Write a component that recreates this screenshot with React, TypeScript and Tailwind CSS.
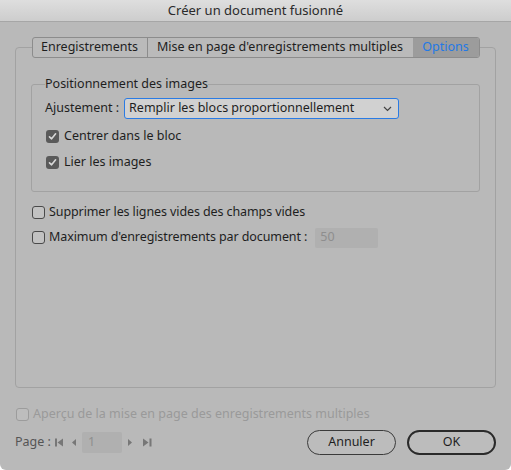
import React from 'react'

const FONT = { fontFamily: '"Noto Sans", "DejaVu Sans", sans-serif' }

function CheckBox({ checked, disabled }: { checked?: boolean; disabled?: boolean }) {
  if (checked) {
    return (
      <span className="flex h-[13px] w-[13px] shrink-0 items-center justify-center rounded-[3px] bg-[#5a5a5a]">
        <svg width="9" height="9" viewBox="0 0 9 9">
          <path d="M1.5 4.8 L3.6 6.8 L7.6 1.8" fill="none" stroke="#d8d8d8" strokeWidth="1.6" strokeLinecap="round" strokeLinejoin="round" />
        </svg>
      </span>
    )
  }
  return (
    <span
      className={
        disabled
          ? 'h-[13px] w-[13px] shrink-0 rounded-[3px] border border-[#9c9c9c] bg-[#bdbdbd]'
          : 'h-[13px] w-[13px] shrink-0 rounded-[3px] border border-[#4a4a4a] bg-[#c2c2c2]'
      }
    />
  )
}

function NavIcon({ kind }: { kind: 'first' | 'prev' | 'next' | 'last' }) {
  const c = '#777'
  return (
    <svg width="9" height="9" viewBox="0 0 9 9">
      {kind === 'first' && (
        <>
          <rect x="0" y="0.5" width="2" height="8" fill={c} />
          <path d="M8 0.5 L2.5 4.5 L8 8.5 Z" fill={c} />
        </>
      )}
      {kind === 'prev' && <path d="M5 1 L1 4.5 L5 8 Z" fill={c} />}
      {kind === 'next' && <path d="M1 1 L5 4.5 L1 8 Z" fill={c} />}
      {kind === 'last' && (
        <>
          <path d="M0 0.5 L5.5 4.5 L0 8.5 Z" fill={c} />
          <rect x="6.5" y="0.5" width="2" height="8" fill={c} />
        </>
      )}
    </svg>
  )
}

export default function App() {
  return (
    <div
      className="relative h-[470px] w-[511px] overflow-hidden rounded-b-[6px] bg-[#b9b9b9] text-[12.5px] text-[#1e1e1e]"
      style={FONT}
    >
      {/* Title bar */}
      <div className="flex h-[22px] items-center justify-center border-b border-[#a6a6a6] bg-gradient-to-b from-[#dedede] to-[#cdcdcd] text-[13px] text-[#2a2a2a]">
        Créer un document fusionné
      </div>

      <div className="px-[15px]">
        {/* Tab panel */}
        <div className="mt-[25px] flex h-[341px] flex-col rounded-[4px] border border-[#a2a2a2]">
          <div className="-mt-[11px] flex justify-center">
            <div className="flex h-[21px] overflow-hidden rounded-[3px] border border-[#8c8c8c] bg-[#bababa]">
              <div className="flex w-[115px] items-center justify-center border-r border-[#8c8c8c]">
                Enregistrements
              </div>
              <div className="flex w-[265px] items-center justify-center">
                Mise en page d'enregistrements multiples
              </div>
              <div className="flex w-[66px] items-center justify-center bg-[#9c9c9c] text-[#2379e6]">
                Options
              </div>
            </div>
          </div>

          {/* Group box */}
          <div className="mx-[15px] mt-[26px] flex h-[108px] flex-col rounded-[3px] border border-[#a2a2a2] px-[13px]">
            <div className="-mt-[9px] self-start bg-[#b9b9b9] leading-[16px]">
              Positionnement des images
            </div>
            <div className="mt-[6px] flex items-center">
              <span>Ajustement :</span>
              <div className="ml-[5px] flex h-[21px] w-[275px] items-center justify-between rounded-[3px] border border-[#2a7be4] bg-[#d1d1d1] pl-[4px] pr-[6px]">
                <span>Remplir les blocs proportionnellement</span>
                <svg width="9" height="6" viewBox="0 0 9 6">
                  <path d="M1 1 L4.5 4.5 L8 1" fill="none" stroke="#444" strokeWidth="1.2" />
                </svg>
              </div>
            </div>
            <div className="mt-[8px] flex items-center gap-[5px] pl-[1px]">
              <CheckBox checked />
              <span>Centrer dans le bloc</span>
            </div>
            <div className="mt-[7px] flex items-center gap-[5px] pl-[1px]">
              <CheckBox checked />
              <span>Lier les images</span>
            </div>
          </div>

          <div className="mt-[11px] flex items-center gap-[4px] pl-[16px]">
            <CheckBox />
            <span className="tracking-[-0.1px]">Supprimer les lignes vides des champs vides</span>
          </div>
          <div className="mt-[6px] flex items-center gap-[4px] pl-[16px]">
            <CheckBox />
            <span className="tracking-[-0.1px]">Maximum d'enregistrements par document :</span>
            <div className="ml-[4px] flex h-[20px] w-[63px] items-center rounded-[2px] bg-[#b0b0b0] px-[5px] text-[#8e8e8e]">
              50
            </div>
          </div>
        </div>

        {/* Footer */}
        <div className="mt-[17px] flex items-center gap-[4px] pl-[1px] text-[#9a9a9a]">
          <CheckBox disabled />
          <span>Aperçu de la mise en page des enregistrements multiples</span>
        </div>
        <div className="mt-[6px] flex items-center">
          <span className="text-[#555]">Page :</span>
          <div className="ml-[4px] flex items-center gap-[7px]">
            <NavIcon kind="first" />
            <NavIcon kind="prev" />
          </div>
          <div className="ml-[2px] flex h-[21px] w-[40px] items-center rounded-[2px] bg-[#b0b0b0] px-[6px] text-[#8e8e8e]">
            1
          </div>
          <div className="ml-[5px] flex items-center gap-[7px]">
            <NavIcon kind="next" />
            <NavIcon kind="last" />
          </div>
          <div className="ml-auto flex gap-[11px]">
            <button className="flex h-[25px] w-[89px] items-center justify-center rounded-full border border-[#3a3a3a] bg-[#bcbcbc]">
              Annuler
            </button>
            <button className="flex h-[25px] w-[89px] items-center justify-center rounded-full border-2 border-[#2a2a2a] bg-[#bcbcbc]">
              OK
            </button>
          </div>
        </div>
      </div>
    </div>
  )
}
